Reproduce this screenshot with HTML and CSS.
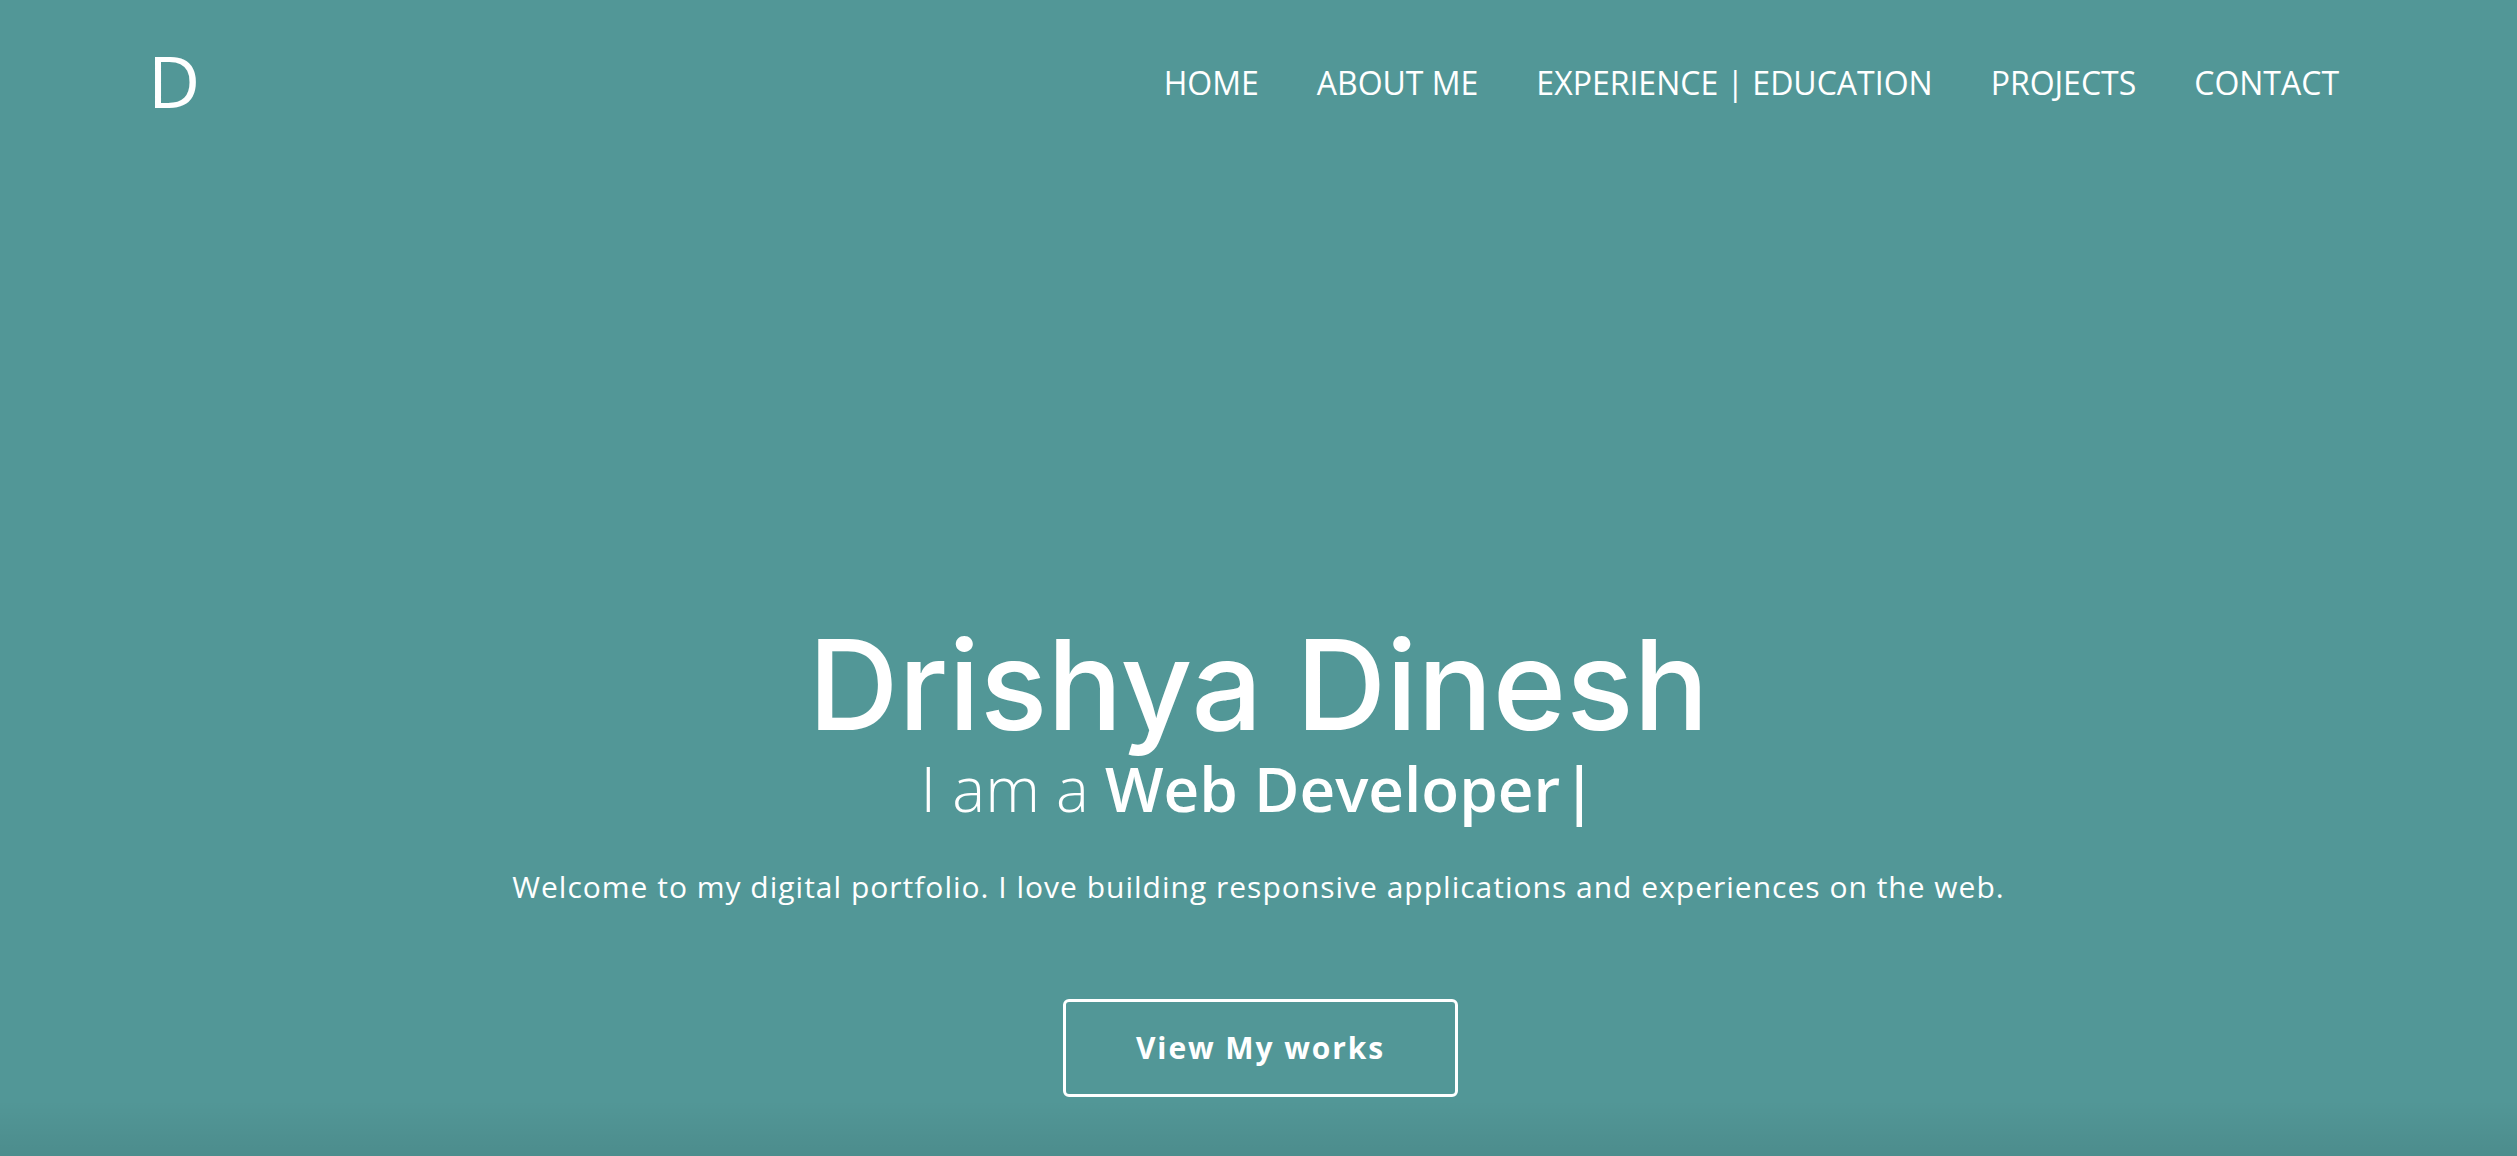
FILE: index.html
```html
<!DOCTYPE html>
<html lang="en">
<head>
<meta charset="utf-8">
<title>Drishya Dinesh</title>
<link rel="stylesheet" href="styles.css">
</head>
<body>
<div class="page">
  <header class="header">
    <a class="logo" href="#">D</a>
    <nav class="nav">
      <a href="#">HOME</a>
      <a href="#">ABOUT ME</a>
      <a href="#">EXPERIENCE | EDUCATION</a>
      <a href="#">PROJECTS</a>
      <a href="#">CONTACT</a>
    </nav>
  </header>
  <main class="hero">
    <h1 class="title">Drishya Dinesh</h1>
    <p class="subtitle">I am a <strong>Web Developer<span class="cursor">|</span></strong></p>
    <p class="intro">Welcome to my digital portfolio. I love building responsive applications and experiences on the web.</p>
    <a class="btn" href="#">View My works</a>
  </main>
</div>
</body>
</html>
```
FILE: styles.css
```css
html, body {
  margin: 0;
  padding: 0;
}
body {
  background: #529797;
  color: #fff;
  font-family: "Open Sans", "Noto Sans", sans-serif;
}
.page {
  height: 1156px;
  overflow: hidden;
  background: linear-gradient(to bottom, rgba(0,0,0,0) 0, rgba(0,0,0,0) 1100px, rgba(0,0,0,0.07) 1156px);
}
a {
  color: #fff;
  text-decoration: none;
}
.header {
  display: flex;
  justify-content: space-between;
  align-items: flex-start;
  padding: 44px 178px 0 148px;
}
.logo {
  font-size: 72px;
  line-height: 1;
  font-weight: 400;
}
.nav {
  display: flex;
  gap: 58px;
  margin-top: 23px;
  font-size: 32px;
  line-height: 1;
}
.hero {
  display: flex;
  flex-direction: column;
  align-items: center;
  text-align: center;
  padding-top: 506px;
}
.title {
  margin: 0;
  font-family: Inter, "Noto Sans", sans-serif;
  font-weight: 500;
  font-size: 125px;
  line-height: 1;
  letter-spacing: 0;
}
.subtitle {
  margin: 10px 0 0;
  font-size: 62px;
  line-height: 1;
  font-weight: 300;
}
.subtitle strong {
  font-weight: 600;
}
.cursor {
  margin-left: 2px;
}
.intro {
  margin: 53px 0 0;
  font-size: 30px;
  line-height: 1;
  letter-spacing: 1px;
}
.btn {
  margin: 97px 0 0 4px;
  border: 3px solid #fff;
  border-radius: 6px;
  padding: 31px 0;
  width: 389px;
  font-size: 30px;
  line-height: 1;
  font-weight: 700;
  letter-spacing: 1.9px;
}
```
